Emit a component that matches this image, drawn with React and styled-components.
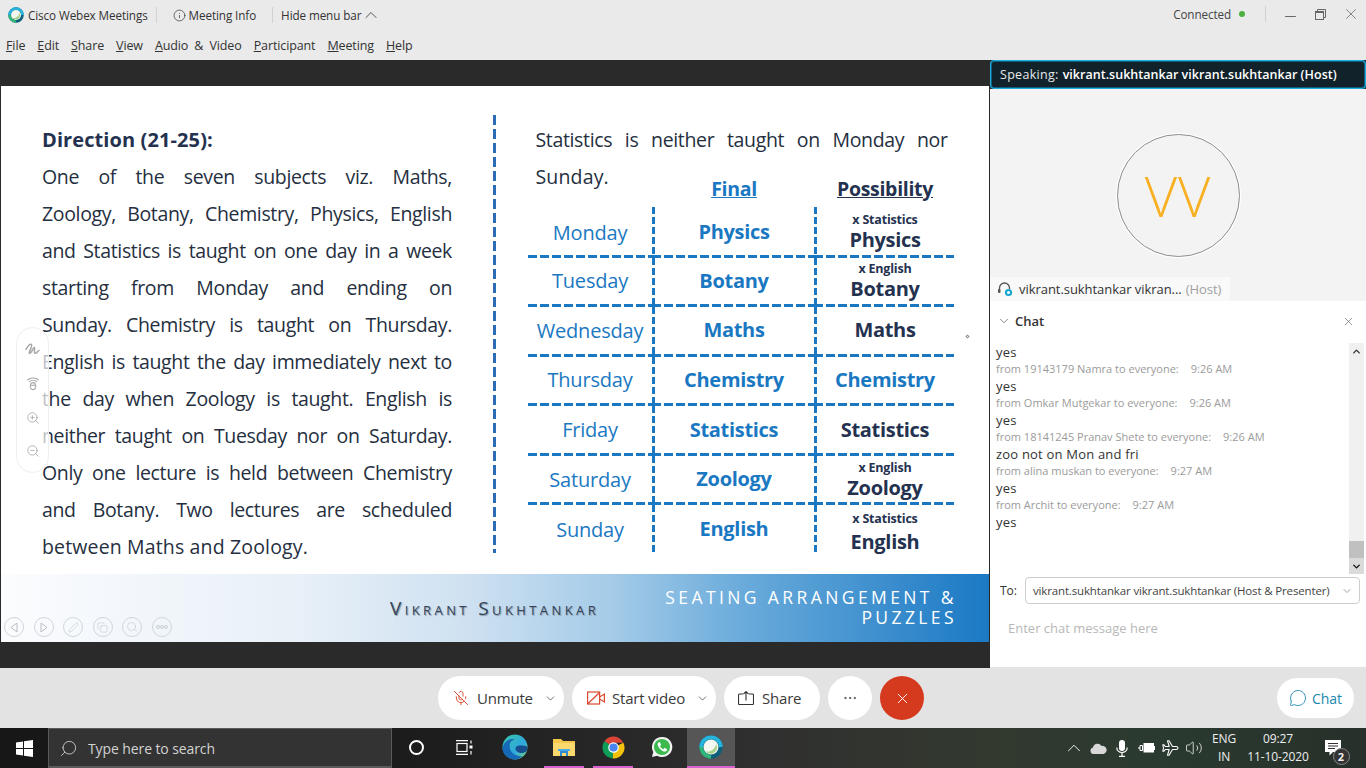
import React from 'react';
import styled, { createGlobalStyle } from 'styled-components';
import {
  ChevronDown, ChevronUp, Info, Minus, X, ZoomIn, ZoomOut, Search, MoreHorizontal,
  MessageCircle, MicOff, Pen, Copy, Volume2,
} from 'lucide-react';

const GlobalStyle = createGlobalStyle`
  html, body {
    margin: 0;
    padding: 0;
    width: 1366px;
    height: 768px;
    overflow: hidden;
    font-family: "Open Sans", "Noto Sans", sans-serif;
  }
  * { box-sizing: border-box; }
`;

const Page = styled.div`
  width: 1366px;
  height: 768px;
  display: flex;
  flex-direction: column;
  background: #eaeaea;
`;

const TitleBar = styled.div`
  height: 30px;
  display: flex;
  align-items: center;
  font-size: 11.7px;
  color: #333;
  background: #eaeaea;
`;

const LogoSlot = styled.div`
  display: flex;
  margin: 0 4px 0 8px;
`;

const TitleText = styled.span`
  white-space: nowrap;
  letter-spacing: -0.1px;
  margin-left: ${p => p.$left || 0}px;
`;

const TitleSep = styled.span`
  width: 1px;
  height: 16px;
  background: #d2d2d2;
  margin: ${p => p.$margin};
`;

const TitleRight = styled.div`
  margin-left: auto;
  display: flex;
  align-items: center;
  color: #444;
  margin-top: -2px;
`;

const GreenDot = styled.span`
  width: 6px;
  height: 6px;
  border-radius: 50%;
  background: #4caf3f;
  margin-left: 8px;
`;

const WinBtn = styled.span`
  display: flex;
  margin: ${p => p.$margin || '0'};
  color: #666;
`;

const MenuBar = styled.div`
  height: 30px;
  display: flex;
  align-items: center;
  padding-left: 6px;
  gap: 12px;
  font-size: 12.5px;
  color: #333;
  letter-spacing: -0.12px;
  word-spacing: 3px;
  background: #eaeaea;
`;

const MenuItem = styled.span`
  white-space: nowrap;
  &::first-letter { text-decoration: underline; }
`;

const Main = styled.div`
  height: 608px;
  display: flex;
  background: #2a2a2a;
`;

const Stage = styled.div`
  width: 990px;
  padding: 26px 1px 26px 1px;
`;

const Slide = styled.div`
  position: relative;
  width: 988px;
  height: 556px;
  background: #fff;
  display: flex;
  flex-direction: column;
`;

const SlideBody = styled.div`
  height: 488px;
  display: flex;
  padding: 29px 0 0 41px;
`;

const LeftCol = styled.div`
  width: 410px;
  padding-top: 5.5px;
  margin-right: 41px;
`;

const Line = styled.div`
  font-size: 19.5px;
  line-height: 37px;
  color: #252f40;
  white-space: nowrap;
  text-align: justify;
  text-align-last: ${p => (p.$last ? 'left' : 'justify')};
  letter-spacing: ${p => (p.$last ? '0.15px' : '-0.35px')};
  word-spacing: ${p => (p.$last ? '0' : '-1px')};
`;

const Heading = styled.div`
  font-size: 20px;
  line-height: 37px;
  font-weight: 700;
  color: #243250;
  letter-spacing: 0.1px;
`;

const Divider = styled.div`
  width: 2.5px;
  height: 438px;
  background: repeating-linear-gradient(to bottom, #2b6cb5 0 10px, transparent 10px 14px);
`;

const RightCol = styled.div`
  padding: 5.5px 0 0 32.5px;
`;

const Para = styled.div`
  width: 412px;
  margin-left: 7.5px;
  height: 74px;
`;

const Table = styled.div`
  width: 426px;
  margin-top: -18px;
  display: grid;
  grid-template-columns: 124px 162px 140px;
  grid-template-rows: 30px 51px repeat(5, 49.6px) 47.8px;
`;

const HeadCell = styled.div`
  display: flex;
  align-items: center;
  justify-content: center;
  padding: 0 0 7px 2px;
  font-size: 19.5px;
  font-weight: 700;
  letter-spacing: -0.3px;
  text-decoration: underline;
  color: ${p => (p.$blue ? '#1a78c2' : '#243250')};
`;

const dashV = 'repeating-linear-gradient(to bottom, #1a78c2 0 7px, transparent 7px 10px)';
const dashH = 'repeating-linear-gradient(to right, #1a78c2 0 9px, transparent 9px 12px)';

const Cell = styled.div`
  display: flex;
  flex-direction: column;
  align-items: center;
  justify-content: center;
  padding-left: ${p => (p.$divider ? '2px' : '0')};
  padding-top: ${p => (p.$drop ? '6px' : '0')};
  padding-bottom: ${p => (p.$tight ? '0' : p.$note ? '2px' : '3px')};
  background-repeat: no-repeat;
  background-image: ${p => [p.$divider && dashV, !p.$end && dashH].filter(Boolean).join(', ') || 'none'};
  background-size: ${p => [p.$divider && '3px 100%', !p.$end && '100% 3px'].filter(Boolean).join(', ') || 'auto'};
  background-position: ${p => [p.$divider && 'left top', !p.$end && 'left bottom'].filter(Boolean).join(', ') || '0 0'};
`;

const DayText = styled.span`
  font-size: 20px;
  color: #1a78c2;
  letter-spacing: -0.2px;
  white-space: nowrap;
`;

const SubjectText = styled.span`
  font-size: 20px;
  line-height: ${p => (p.$note ? '24px' : '26px')};
  font-weight: 700;
  letter-spacing: -0.3px;
  white-space: nowrap;
  color: ${p => (p.$dark ? '#243250' : '#1a78c2')};
`;

const NoteText = styled.span`
  font-size: 12.5px;
  line-height: 16px;
  font-weight: 700;
  letter-spacing: -0.2px;
  color: #243250;
  white-space: nowrap;
  margin-bottom: ${p => (p.$wide ? '3px' : '0')};
`;

const Banner = styled.div`
  height: 68px;
  display: flex;
  align-items: center;
  background: linear-gradient(90deg, #fbfcfe 0%, #e8f0f8 30%, #cfe1f1 47%, #a4cbe8 62%, #6aabdb 75%, #1b79c4 100%);
`;

const BannerName = styled.div`
  margin-left: 389px;
  font-size: 19px;
  letter-spacing: 3.4px;
  font-variant: small-caps;
  color: #33445a;
  text-shadow: 1px 1px 1px #8898a8;
  white-space: nowrap;
`;

const BannerTitle = styled.div`
  margin: 0 32px 2px auto;
  text-align: right;
  font-size: 17.5px;
  line-height: 20px;
  letter-spacing: 3.4px;
  color: #fff;
  white-space: nowrap;
`;

const SideTools = styled.div`
  position: absolute;
  left: 15px;
  top: 241px;
  width: 33px;
  height: 146px;
  border: 1px solid #eeeeee;
  border-radius: 17px;
  background: rgba(255, 255, 255, 0.7);
  display: flex;
  flex-direction: column;
  align-items: center;
  justify-content: space-around;
  padding: 4px 0;
  color: #a0a0a0;
`;

const NavTools = styled.div`
  position: absolute;
  left: 3px;
  bottom: 5px;
  display: flex;
  gap: 9.5px;
`;

const NavCircle = styled.span`
  width: 20px;
  height: 20px;
  border-radius: 50%;
  border: 1px solid #cfd6dc;
  display: flex;
  align-items: center;
  justify-content: center;
  color: #b8bec4;
`;

const Speck = styled.span`
  position: absolute;
  left: 965px;
  top: 249px;
  width: 3px;
  height: 3px;
  transform: rotate(45deg);
  border: 1px solid #8a8a8a;
`;

const Side = styled.div`
  flex: 1;
  display: flex;
  flex-direction: column;
  background: #f3f3f3;
`;

const SpeakSlot = styled.div`
  height: 29px;
  flex: none;
  background: #2a2a2a;
`;

const SpeakingBar = styled.div`
  height: 29px;
  display: flex;
  align-items: center;
  padding-left: 8px;
  background: #12222a;
  border: 2px solid #0f5f7c;
  outline: 1px solid #20aee0;
  outline-offset: -1px;
  border-radius: 4px;
  font-size: 12.5px;
  letter-spacing: 0.3px;
  color: #e8e8e8;
  white-space: nowrap;
`;

const SpeakingName = styled.b`
  font-weight: 600;
  color: #fff;
  margin-left: 4px;
  letter-spacing: 0.02px;
`;

const VideoArea = styled.div`
  height: 212px;
  display: flex;
  flex-direction: column;
`;

const AvatarWrap = styled.div`
  flex: 1;
  display: flex;
  align-items: center;
  justify-content: center;
  padding-top: 24px;
`;

const Avatar = styled.div`
  width: 123px;
  height: 123px;
  border-radius: 50%;
  border: 1px solid #8f8f8f;
  box-shadow: 0 0 0 1px #fff;
  display: flex;
  align-items: center;
  justify-content: center;
  font-size: 56px;
  font-weight: 300;
  font-kerning: none;
  letter-spacing: 1px;
  color: #f8b023;
`;

const NameTab = styled.div`
  width: 240px;
  height: 24px;
  display: flex;
  align-items: center;
  gap: 4px;
  padding-left: 7px;
  background: #f9f9f9;
  font-size: 13px;
  color: #333;
  white-space: nowrap;
  letter-spacing: -0.05px;
`;

const HeadsetSlot = styled.span`
  display: flex;
  margin-right: 2px;
`;

const HostText = styled.span`
  color: #a0a0a0;
`;

const ChatPanel = styled.div`
  flex: 1;
  background: #fff;
  display: flex;
  flex-direction: column;
  border-bottom: 1px solid #e3e3e3;
`;

const ChatHead = styled.div`
  height: 42px;
  display: flex;
  align-items: center;
  gap: 4px;
  padding: 0 11px 2px 7px;
  font-size: 13px;
  font-weight: 600;
  color: #333;
`;

const CloseBtn = styled.span`
  display: flex;
  margin-left: auto;
  color: #555;
`;

const ChatBody = styled.div`
  height: 231px;
  display: flex;
`;

const Messages = styled.div`
  flex: 1;
  padding: 1px 0 0 6px;
`;

const MsgText = styled.div`
  font-size: 13px;
  line-height: 17px;
  letter-spacing: 0.2px;
  color: #333;
`;

const MsgMeta = styled.div`
  display: flex;
  gap: 12px;
  margin: -1px 0 1px;
  font-size: 11px;
  line-height: 17px;
  color: #9b9b9b;
`;

const ScrollBar = styled.div`
  width: 15px;
  margin-right: 2px;
  background: #f0f0f0;
  display: flex;
  flex-direction: column;
`;

const ScrollUp = styled.span`
  height: 16px;
  display: flex;
  align-items: center;
  justify-content: center;
  color: #333;
`;

const ScrollThumb = styled.span`
  height: 17px;
  margin-top: auto;
  background: #c0c0c0;
`;

const ScrollDown = styled.span`
  height: 16px;
  display: flex;
  align-items: center;
  justify-content: center;
  background: #dadada;
  color: #111;
`;

const ToRow = styled.div`
  display: flex;
  align-items: center;
  padding: 3px 6px 0 10px;
  font-size: 12px;
  color: #333;
`;

const ToSelect = styled.div`
  width: 335px;
  height: 27px;
  margin-left: 8px;
  border: 1px solid #cdcdcd;
  border-radius: 4px;
  display: flex;
  align-items: center;
  justify-content: space-between;
  padding: 0 6px 0 7px;
  font-size: 11.5px;
  letter-spacing: -0.15px;
  color: #444;
  white-space: nowrap;
`;

const ChatInput = styled.div`
  padding: 15px 0 0 18px;
  font-size: 13px;
  color: #b8b8b8;
`;

const ToolBar = styled.div`
  height: 60px;
  display: flex;
  align-items: center;
  gap: 8px;
  padding: 0 12px 0 438px;
  background: #e3e3e3;
`;

const Pill = styled.div`
  height: 44px;
  width: ${p => p.$w}px;
  border-radius: 22px;
  background: #fff;
  display: flex;
  align-items: center;
  padding-left: ${p => p.$pad || 15}px;
  gap: ${p => p.$gap || 7}px;
  font-size: 15px;
  color: #3a3a3a;
  white-space: nowrap;
  letter-spacing: -0.2px;
`;

const PillChevron = styled.span`
  display: flex;
  margin-left: auto;
  margin-right: 7px;
  color: #444;
`;

const RoundBtn = styled.div`
  width: 44px;
  height: 44px;
  border-radius: 50%;
  background: ${p => (p.$red ? '#d63a1e' : '#fff')};
  color: ${p => (p.$red ? '#fff' : '#444')};
  display: flex;
  align-items: center;
  justify-content: center;
`;

const ChatPill = styled.div`
  margin-left: auto;
  width: 77px;
  height: 40px;
  border-radius: 20px;
  background: #fff;
  display: flex;
  align-items: center;
  justify-content: center;
  gap: 5px;
  font-size: 14px;
  color: #1b87ad;
`;

const TaskBar = styled.div`
  height: 40px;
  display: flex;
  align-items: center;
  background: linear-gradient(90deg, #171717 0%, #1c1c1c 30%, #2f2f2f 55%, #33392f 72%, #2a3a30 85%, #27302a 100%);
`;

const StartBtn = styled.div`
  width: 48px;
  display: flex;
  justify-content: center;
`;

const SearchBox = styled.div`
  width: 344px;
  height: 40px;
  display: flex;
  align-items: center;
  gap: 10px;
  padding: 1px 0 0 10px;
  background: #333;
  border: 1px solid #5a5a5a;
  border-bottom-width: 2px;
  font-size: 14px;
  color: #d2d2d2;
  letter-spacing: -0.1px;
`;

const SearchGlass = styled(Search)`
  transform: scaleX(-1);
`;

const TaskSlot = styled.div`
  width: 48px;
  height: 40px;
  margin-left: ${p => p.$gap || 0}px;
  display: flex;
  align-items: center;
  justify-content: center;
  background: ${p => (p.$active ? '#565656' : 'transparent')};
  border-bottom: 2px solid transparent;
  position: relative;
  &::after {
    content: '';
    display: ${p => (p.$open ? 'block' : 'none')};
    position: absolute;
    bottom: -2px;
    left: ${p => (p.$active ? 0 : 4)}px;
    right: ${p => (p.$active ? 0 : 4)}px;
    height: 2px;
    background: #d861d2;
  }
`;

const Cortana = styled.span`
  width: 15px;
  height: 15px;
  border-radius: 50%;
  border: 2px solid #fff;
`;

const Tray = styled.div`
  margin-left: auto;
  display: flex;
  align-items: center;
  color: #fff;
`;

const TrayIcon = styled.span`
  display: flex;
  width: 24px;
  justify-content: center;
`;

const TrayText = styled.div`
  text-align: center;
  font-size: 12px;
  line-height: 18px;
  color: #eee;
  width: ${p => p.$w}px;
  white-space: nowrap;
  letter-spacing: -0.1px;
`;

const NoteWrap = styled.div`
  position: relative;
  display: flex;
  width: 52px;
  padding-left: 11px;
`;

const NoteBadge = styled.span`
  position: absolute;
  left: 18.5px;
  top: 8px;
  width: 17px;
  height: 17px;
  border-radius: 50%;
  border: 1px solid #888;
  background: #333;
  color: #eee;
  font-size: 11px;
  font-weight: 700;
  display: flex;
  align-items: center;
  justify-content: center;
`;

const WebexLogo = ({ size = 16 }) => (
  <svg width={size} height={size} viewBox="0 0 32 32">
    <circle cx="16" cy="16" r="15.5" fill="#0d5f7a" />
    <path d="M16 .5A15.5 15.5 0 0 1 31.5 16h-5A10.5 10.5 0 0 0 16 5.5 10.5 10.5 0 0 0 5.5 16h-5A15.5 15.5 0 0 1 16 .5z" fill="#25b5dc" />
    <path d="M.5 16a15.5 15.5 0 0 0 15.5 15.5v-5A10.5 10.5 0 0 1 5.5 16z" fill="#2fb87a" />
    <circle cx="16" cy="16" r="10" fill="#f4f8f0" />
    <path d="M9 22c6 1 12-2 14-10 3 6-1 13-7 13-3 0-5-1-7-3z" fill="#a7d08a" />
  </svg>
);

const Squiggle = () => (
  <svg width="15" height="15" viewBox="0 0 16 16" fill="none" stroke="#a8a8a8" strokeWidth="1.6" strokeLinecap="round">
    <path d="M1 8c2-4 5-7 6-5S3 12 5 12s4-7 5-6-1 6 1 6 2-2 4-3" />
  </svg>
);

const Laser = () => (
  <svg width="14" height="15" viewBox="0 0 16 16" fill="none" stroke="#a8a8a8" strokeWidth="1.2">
    <path d="M1.5 4C5 .8 11 .8 14.5 4M3.5 6C6 4 10 4 12.5 6" />
    <rect x="5" y="7" width="6" height="8" rx="3" />
    <path d="M5 10h6" />
  </svg>
);

const NavTriangle = ({ flip }) => (
  <svg width="8" height="11" viewBox="0 0 8 11" fill="none" stroke="#b8bec4">
    <path d={flip ? 'M1 1l6 4.500-6 4.500z' : 'M7 1L1 5.500 7 10z'} />
  </svg>
);

const NavDots = () => (
  <svg width="12" height="4" viewBox="0 0 12 4" fill="none" stroke="#b8bec4" strokeWidth="0.7">
    <circle cx="2" cy="2" r="1.500" />
    <circle cx="6" cy="2" r="1.500" />
    <circle cx="10" cy="2" r="1.500" />
  </svg>
);

const VideoOffIcon = () => (
  <svg width="18" height="14" viewBox="0 0 18 14" fill="none" stroke="#db4a30" strokeWidth="1.2">
    <rect x="0.6" y="1" width="12" height="12" />
    <path d="M12.6 6l4.800-3v8l-4.800-3M.6 13L13 1" />
  </svg>
);

const ShareIcon = () => (
  <svg width="16" height="14" viewBox="0 0 16 14" fill="none" stroke="#333" strokeWidth="1.1">
    <path d="M5 3H1.500a1 1 0 0 0-1 1v8.500a1 1 0 0 0 1 1h13a1 1 0 0 0 1-1V4a1 1 0 0 0-1-1H11M8 9.500V.8M5.500 3L8 .6 10.500 3" />
  </svg>
);

const HeadsetIcon = () => (
  <svg width="16" height="16" viewBox="0 0 16 16" fill="none">
    <path d="M2.500 9V7a5 5 0 0 1 10 0v1" stroke="#555" strokeWidth="1.3" />
    <rect x="1" y="8" width="2.500" height="4" rx="1" fill="#555" />
    <circle cx="11.500" cy="11.500" r="3.600" fill="#17a5cf" />
    <circle cx="11.500" cy="11.500" r="1.500" fill="#fff" />
  </svg>
);

const RestoreIcon = () => (
  <svg width="11" height="11" viewBox="0 0 11 11" fill="none" stroke="#666">
    <rect x="0.500" y="2.500" width="8" height="8" />
    <path d="M2.500 2.500v-2h8v8h-2" />
    <path d="M.5 3.500h8" />
  </svg>
);

const WindowsIcon = () => (
  <svg width="17" height="17" viewBox="0 0 17 17" fill="#fff">
    <path d="M0 2.400l7-1v6.600H0zM8 1.300L17 0v8H8zM0 9h7v6.600l-7-1zM8 9h9v8l-9-1.300z" />
  </svg>
);

const TaskViewIcon = () => (
  <svg width="17" height="15" viewBox="0 0 17 15" fill="none" stroke="#fff" strokeWidth="1.2">
    <rect x="1" y="3.500" width="10" height="8" />
    <path d="M0 .7h12M0 14.300h12M15 .5v3M15 11v3.500" />
    <rect x="13.500" y="5.500" width="3" height="3" fill="#fff" stroke="none" />
  </svg>
);

const EdgeIcon = () => (
  <svg width="26" height="26" viewBox="0 0 26 26">
    <defs>
      <linearGradient id="edgeA" x1="0" y1="0" x2="1" y2="1">
        <stop offset="0" stopColor="#38c6a4" />
        <stop offset="0.6" stopColor="#2fa7e0" />
        <stop offset="1" stopColor="#7fdb6a" />
      </linearGradient>
    </defs>
    <circle cx="13" cy="13" r="12.500" fill="url(#edgeA)" />
    <path d="M.6 14C2 7 8 4 13 5.500c-5 1-6 5-5 9 1 5 7 8 12 7.500-2 2.500-4.500 3.500-7 3.500C6 25.500.5 20 .6 14z" fill="#1668b8" />
    <path d="M25.500 14c0 3-3 5-6 5-3 0-6-2-6-4.500 0-2 2-3 4-3 4 0 8 0 8 2.500z" fill="#154d8f" />
  </svg>
);

const FolderIcon = () => (
  <svg width="22" height="20" viewBox="0 0 22 20">
    <path d="M0 2h8l2 2h12v15H0z" fill="#f5c84c" />
    <path d="M0 6h22v13H0z" fill="#fbd96f" />
    <path d="M7 13h8v6h-2v-3H9v3H7z" fill="#2f8ad0" />
    <path d="M5 12h12v2H5z" fill="#49a9e8" />
  </svg>
);

const ChromeIcon = () => (
  <svg width="23" height="23" viewBox="0 0 24 24">
    <path d="M12 12L2.500 5.500A11.500 11.500 0 0 1 22.300 7H12z" fill="#db4437" />
    <path d="M12 12L22.300 7A11.500 11.500 0 0 1 11 23.500z" fill="#f4c20d" />
    <path d="M12 12L11 23.500A11.500 11.500 0 0 1 2.500 5.500z" fill="#0f9d58" />
    <circle cx="12" cy="12" r="5.500" fill="#fff" />
    <circle cx="12" cy="12" r="4.300" fill="#4a84ee" />
  </svg>
);

const WhatsappIcon = () => (
  <svg width="22" height="22" viewBox="0 0 24 24">
    <path d="M12 1a11 11 0 0 0-9.500 16.500L1 23l5.700-1.500A11 11 0 1 0 12 1z" fill="#f4f4f4" />
    <circle cx="12" cy="12" r="8.800" fill="#3cba4e" />
    <path d="M8.500 6.800c-1.300 1-1.600 2.600-.7 4.500 1.100 2.400 3 4.200 5.400 5.200 1.900.8 3.400.3 4.200-1 .3-.6.200-1-.3-1.300l-2-1c-.4-.2-.7-.1-1 .3l-.7.9c-1.500-.6-2.800-1.800-3.500-3.300l.7-.7c.3-.3.3-.6.200-1l-.9-2.200c-.3-.6-1-.8-1.400-.4z" fill="#fff" />
  </svg>
);

const CloudIcon = () => (
  <svg width="17" height="11" viewBox="0 0 17 11" fill="#d8d8d8">
    <path d="M3.500 11A3.300 3.300 0 0 1 3 4.500 4.600 4.600 0 0 1 11.500 3 3.900 3.900 0 0 1 13.500 11z" />
  </svg>
);

const MicFilled = () => (
  <svg width="12" height="17" viewBox="0 0 12 17" fill="none" stroke="#fff" strokeWidth="1.2">
    <rect x="3" y="0" width="6" height="11" rx="3" fill="#fff" stroke="none" />
    <path d="M.8 7.500c0 3 2.200 5 5.200 5s5.200-2 5.200-5M6 12.500v3.500M3 16.400h6" />
  </svg>
);

const BatteryPlug = () => (
  <svg width="17" height="12" viewBox="0 0 17 12" fill="none" stroke="#fff">
    <rect x="6" y="1.500" width="9.500" height="8.500" fill="#fff" />
    <path d="M16.500 4v4" />
    <path d="M0 6h2M2 3.500h2.500v5H2zM4.500 4.500H5M4.500 7.500H5" />
  </svg>
);

const PlaneIcon = () => (
  <svg width="17" height="16" viewBox="0 0 17 16" fill="none" stroke="#fff" strokeWidth="1.1" strokeLinejoin="round">
    <path d="M16 8c0-1-1-1.500-2-1.500H10.500L7 .8H5.500L7.200 6.500H3.300L2 4.800H.8L1.500 8 .8 11.200H2l1.300-1.700h3.900L5.500 15.200H7l3.500-5.700H14c1 0 2-.5 2-1.500z" />
  </svg>
);

const ActionCenter = () => (
  <svg width="17" height="16" viewBox="0 0 17 16" fill="#fff">
    <path d="M0 0h16v12H8l-3.500 3.500V12H0z" />
    <path d="M3 3.500h10M3 6h10M3 8.500h7" stroke="#333" strokeWidth="1" />
  </svg>
);

const days = [
  { day: 'Monday', final: 'Physics', note: 'x Statistics', poss: 'Physics' },
  { day: 'Tuesday', final: 'Botany', note: 'x English', poss: 'Botany' },
  { day: 'Wednesday', final: 'Maths', poss: 'Maths' },
  { day: 'Thursday', final: 'Chemistry', poss: 'Chemistry', blue: true },
  { day: 'Friday', final: 'Statistics', poss: 'Statistics' },
  { day: 'Saturday', final: 'Zoology', note: 'x English', poss: 'Zoology' },
  { day: 'Sunday', final: 'English', note: 'x Statistics', poss: 'English' },
];

const leftLines = [
  'One of the seven subjects viz. Maths,',
  'Zoology, Botany, Chemistry, Physics, English',
  'and Statistics is taught on one day in a week',
  'starting from Monday and ending on',
  'Sunday. Chemistry is taught on Thursday.',
  'English is taught the day immediately next to',
  'the day when Zoology is taught. English is',
  'neither taught on Tuesday nor on Saturday.',
  'Only one lecture is held between Chemistry',
  'and Botany. Two lectures are scheduled',
];

const messages = [
  { from: 'from 19143179 Namra to everyone:', time: '9:26 AM' },
  { from: 'from Omkar Mutgekar to everyone:', time: '9:26 AM' },
  { from: 'from 18141245 Pranav Shete to everyone:', time: '9:26 AM' },
  { text: 'zoo not on Mon and fri', from: 'from alina muskan to everyone:', time: '9:27 AM' },
  { from: 'from Archit to everyone:', time: '9:27 AM' },
];

const menus = ['File', 'Edit', 'Share', 'View', 'Audio & Video', 'Participant', 'Meeting', 'Help'];

const App = () => {
  return (
    <Page>
      <GlobalStyle />
      <TitleBar>
        <LogoSlot><WebexLogo /></LogoSlot>
        <TitleText>Cisco Webex Meetings</TitleText>
        <TitleSep $margin="0 16px 0 8px" />
        <Info size={13} strokeWidth={1.3} />
        <TitleText $left={3}>Meeting Info</TitleText>
        <TitleSep $margin="0 8px 0 16px" />
        <TitleText>Hide menu bar</TitleText>
        <ChevronUp size={20} strokeWidth={1} />
        <TitleRight>
          <TitleText>Connected</TitleText>
          <GreenDot />
          <TitleSep $margin="0 16px 0 20px" />
          <WinBtn $margin="4px 0 0 0"><Minus size={17} strokeWidth={1.4} /></WinBtn>
          <WinBtn $margin="0 0 0 16px"><RestoreIcon /></WinBtn>
          <WinBtn $margin="0 6.5px 0 15.5px"><X size={18} strokeWidth={1} /></WinBtn>
        </TitleRight>
      </TitleBar>
      <MenuBar>
        {menus.map(m => <MenuItem key={m}>{m}</MenuItem>)}
      </MenuBar>
      <Main>
        <Stage>
          <Slide>
            <SlideBody>
              <LeftCol>
                <Heading>Direction (21-25):</Heading>
                {leftLines.map(l => <Line key={l}>{l}</Line>)}
                <Line $last>between Maths and Zoology.</Line>
              </LeftCol>
              <Divider />
              <RightCol>
                <Para>
                  <Line>Statistics is neither taught on Monday nor</Line>
                  <Line $last>Sunday.</Line>
                </Para>
                <Table>
                  <span />
                  <HeadCell $blue>Final</HeadCell>
                  <HeadCell>Possibility</HeadCell>
                  {days.map((d, i) => {
                    const end = i === days.length - 1;
                    const tight = i === 0 || end;
                    return (
                      <React.Fragment key={d.day}>
                        <Cell $end={end} $tight={tight}><DayText>{d.day}</DayText></Cell>
                        <Cell $end={end} $tight={tight} $divider><SubjectText>{d.final}</SubjectText></Cell>
                        <Cell $end={end} $tight={tight} $divider $note={!!d.note} $drop={end}>
                          {d.note && <NoteText $wide={end}>{d.note}</NoteText>}
                          <SubjectText $note={!!d.note} $dark={!d.blue}>{d.poss}</SubjectText>
                        </Cell>
                      </React.Fragment>
                    );
                  })}
                </Table>
              </RightCol>
            </SlideBody>
            <Banner>
              <BannerName>Vikrant Sukhtankar</BannerName>
              <BannerTitle>SEATING ARRANGEMENT &amp;<br />PUZZLES</BannerTitle>
            </Banner>
            <SideTools>
              <Squiggle />
              <Laser />
              <ZoomIn size={14} strokeWidth={1.3} />
              <ZoomOut size={14} strokeWidth={1.3} />
            </SideTools>
            <NavTools>
              <NavCircle><NavTriangle /></NavCircle>
              <NavCircle><NavTriangle flip /></NavCircle>
              <NavCircle><Pen size={11} strokeWidth={1} /></NavCircle>
              <NavCircle><Copy size={11} strokeWidth={1} /></NavCircle>
              <NavCircle><Search size={12} strokeWidth={1} /></NavCircle>
              <NavCircle><NavDots /></NavCircle>
            </NavTools>
            <Speck />
          </Slide>
        </Stage>
        <Side>
          <SpeakSlot>
            <SpeakingBar>
              Speaking:<SpeakingName>vikrant.sukhtankar vikrant.sukhtankar (Host)</SpeakingName>
            </SpeakingBar>
          </SpeakSlot>
          <VideoArea>
            <AvatarWrap><Avatar>VV</Avatar></AvatarWrap>
            <NameTab>
              <HeadsetSlot><HeadsetIcon /></HeadsetSlot>
              <span>vikrant.sukhtankar vikran...</span>
              <HostText>(Host)</HostText>
            </NameTab>
          </VideoArea>
          <ChatPanel>
            <ChatHead>
              <ChevronDown size={14} strokeWidth={1.2} color="#555" />
              Chat
              <CloseBtn><X size={13} strokeWidth={1.1} /></CloseBtn>
            </ChatHead>
            <ChatBody>
              <Messages>
                {messages.map(m => (
                  <React.Fragment key={m.from}>
                    <MsgText>{m.text || 'yes'}</MsgText>
                    <MsgMeta><span>{m.from}</span><span>{m.time}</span></MsgMeta>
                  </React.Fragment>
                ))}
                <MsgText>yes</MsgText>
              </Messages>
              <ScrollBar>
                <ScrollUp><ChevronUp size={11} strokeWidth={3} /></ScrollUp>
                <ScrollThumb />
                <ScrollDown><ChevronDown size={11} strokeWidth={3} /></ScrollDown>
              </ScrollBar>
            </ChatBody>
            <ToRow>
              To:
              <ToSelect>
                vikrant.sukhtankar vikrant.sukhtankar (Host &amp; Presenter)
                <ChevronDown size={12} strokeWidth={1} />
              </ToSelect>
            </ToRow>
            <ChatInput>Enter chat message here</ChatInput>
          </ChatPanel>
        </Side>
      </Main>
      <ToolBar>
        <Pill $w={126} $gap={8}>
          <MicOff size={16} strokeWidth={1.4} color="#db4a30" />
          <span>Unmute</span>
          <PillChevron><ChevronDown size={13} strokeWidth={1.4} /></PillChevron>
        </Pill>
        <Pill $w={144}>
          <VideoOffIcon />
          <span>Start video</span>
          <PillChevron><ChevronDown size={13} strokeWidth={1.4} /></PillChevron>
        </Pill>
        <Pill $w={96} $pad={14} $gap={8}>
          <ShareIcon />
          <span>Share</span>
        </Pill>
        <RoundBtn><MoreHorizontal size={16} strokeWidth={1.3} /></RoundBtn>
        <RoundBtn $red><X size={17} strokeWidth={1.3} /></RoundBtn>
        <ChatPill>
          <MessageCircle size={18} strokeWidth={1.2} />
          Chat
        </ChatPill>
      </ToolBar>
      <TaskBar>
        <StartBtn><WindowsIcon /></StartBtn>
        <SearchBox>
          <SearchGlass size={19} strokeWidth={1.1} />
          Type here to search
        </SearchBox>
        <TaskSlot><Cortana /></TaskSlot>
        <TaskSlot><TaskViewIcon /></TaskSlot>
        <TaskSlot $gap={3}><EdgeIcon /></TaskSlot>
        <TaskSlot $gap={1} $open><FolderIcon /></TaskSlot>
        <TaskSlot $gap={1} $open><ChromeIcon /></TaskSlot>
        <TaskSlot $gap={1}><WhatsappIcon /></TaskSlot>
        <TaskSlot $gap={1} $open $active><WebexLogo size={24} /></TaskSlot>
        <Tray>
          <TrayIcon><ChevronUp size={22} strokeWidth={1} /></TrayIcon>
          <TrayIcon><CloudIcon /></TrayIcon>
          <TrayIcon><MicFilled /></TrayIcon>
          <TrayIcon><BatteryPlug /></TrayIcon>
          <TrayIcon><PlaneIcon /></TrayIcon>
          <TrayIcon><Volume2 size={18} strokeWidth={1} /></TrayIcon>
          <TrayText $w={36}>ENG<br />IN</TrayText>
          <TrayText $w={72}>09:27<br />11-10-2020</TrayText>
          <NoteWrap>
            <ActionCenter />
            <NoteBadge>2</NoteBadge>
          </NoteWrap>
        </Tray>
      </TaskBar>
    </Page>
  );
};

export default App;
